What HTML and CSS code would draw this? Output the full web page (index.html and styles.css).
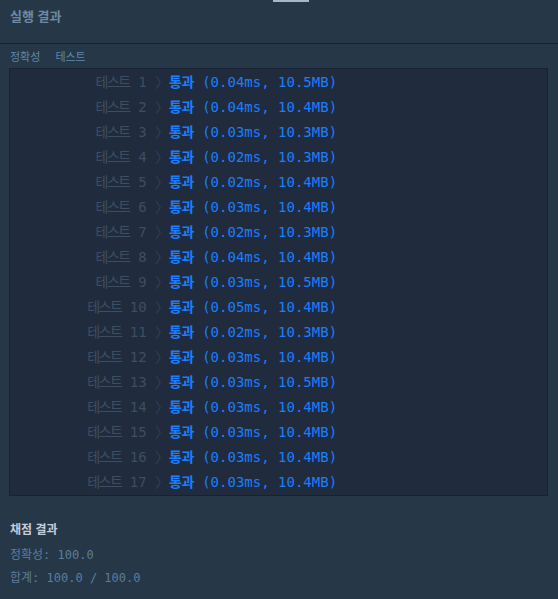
FILE: index.html
```html
<!DOCTYPE html>
<html lang="ko">
<head>
  <meta charset="UTF-8">
  <link rel="stylesheet" href="styles.css">
</head>
<body>
  <div class="splitter"></div>

  <!-- 실행 결과 헤더 -->
  <div class="output-header">실행 결과</div>

  <div class="tabs">
    <span class="tab">정확성</span>
    <span class="tab">테스트</span>
  </div>

  <!-- 테스트 결과 목록 -->
  <div class="console">
    <div class="row"><span class="label"><span class="ko">테스트</span> 1 <span class="arrow">〉</span></span><span class="result"><span class="pass">통과</span> (0.04ms, 10.5MB)</span></div>
    <div class="row"><span class="label"><span class="ko">테스트</span> 2 <span class="arrow">〉</span></span><span class="result"><span class="pass">통과</span> (0.04ms, 10.4MB)</span></div>
    <div class="row"><span class="label"><span class="ko">테스트</span> 3 <span class="arrow">〉</span></span><span class="result"><span class="pass">통과</span> (0.03ms, 10.3MB)</span></div>
    <div class="row"><span class="label"><span class="ko">테스트</span> 4 <span class="arrow">〉</span></span><span class="result"><span class="pass">통과</span> (0.02ms, 10.3MB)</span></div>
    <div class="row"><span class="label"><span class="ko">테스트</span> 5 <span class="arrow">〉</span></span><span class="result"><span class="pass">통과</span> (0.02ms, 10.4MB)</span></div>
    <div class="row"><span class="label"><span class="ko">테스트</span> 6 <span class="arrow">〉</span></span><span class="result"><span class="pass">통과</span> (0.03ms, 10.4MB)</span></div>
    <div class="row"><span class="label"><span class="ko">테스트</span> 7 <span class="arrow">〉</span></span><span class="result"><span class="pass">통과</span> (0.02ms, 10.3MB)</span></div>
    <div class="row"><span class="label"><span class="ko">테스트</span> 8 <span class="arrow">〉</span></span><span class="result"><span class="pass">통과</span> (0.04ms, 10.4MB)</span></div>
    <div class="row"><span class="label"><span class="ko">테스트</span> 9 <span class="arrow">〉</span></span><span class="result"><span class="pass">통과</span> (0.03ms, 10.5MB)</span></div>
    <div class="row"><span class="label"><span class="ko">테스트</span> 10 <span class="arrow">〉</span></span><span class="result"><span class="pass">통과</span> (0.05ms, 10.4MB)</span></div>
    <div class="row"><span class="label"><span class="ko">테스트</span> 11 <span class="arrow">〉</span></span><span class="result"><span class="pass">통과</span> (0.02ms, 10.3MB)</span></div>
    <div class="row"><span class="label"><span class="ko">테스트</span> 12 <span class="arrow">〉</span></span><span class="result"><span class="pass">통과</span> (0.03ms, 10.4MB)</span></div>
    <div class="row"><span class="label"><span class="ko">테스트</span> 13 <span class="arrow">〉</span></span><span class="result"><span class="pass">통과</span> (0.03ms, 10.5MB)</span></div>
    <div class="row"><span class="label"><span class="ko">테스트</span> 14 <span class="arrow">〉</span></span><span class="result"><span class="pass">통과</span> (0.03ms, 10.4MB)</span></div>
    <div class="row"><span class="label"><span class="ko">테스트</span> 15 <span class="arrow">〉</span></span><span class="result"><span class="pass">통과</span> (0.03ms, 10.4MB)</span></div>
    <div class="row"><span class="label"><span class="ko">테스트</span> 16 <span class="arrow">〉</span></span><span class="result"><span class="pass">통과</span> (0.03ms, 10.4MB)</span></div>
    <div class="row"><span class="label"><span class="ko">테스트</span> 17 <span class="arrow">〉</span></span><span class="result"><span class="pass">통과</span> (0.03ms, 10.4MB)</span></div>
  </div>

  <!-- 채점 결과 -->
  <div class="summary">
    <div class="summary-title">채점 결과</div>
    <div class="summary-line">정확성: 100.0</div>
    <div class="summary-line">합계: 100.0 / 100.0</div>
  </div>
</body>
</html>
```
FILE: styles.css
```css
/* 기본 */
body {
  margin: 0;
  background: #263747;
  font-family: "Noto Sans CJK KR", sans-serif;
}

/* 상단 리사이즈 핸들 */
.splitter {
  width: 36px;
  height: 2px;
  margin-left: 273px;
  background: #a9b7c5;
}

.output-header {
  height: 41px;
  padding-left: 10px;
  line-height: 28px;
  font-size: 13px;
  font-weight: bold;
  color: #6f8aa3;
  border-bottom: 1px solid #172231;
}

.tabs {
  display: flex;
  gap: 15px;
  height: 24px;
  padding-left: 10px;
  align-items: center;
  font-size: 11px;
  color: #5d88ad;
}

/* 콘솔 박스 */
.console {
  margin: 0 10px 0 9px;
  padding-top: 1px;
  background: #202b3d;
  border: 1px solid #172233;
  font-family: "DejaVu Sans Mono", "Noto Sans CJK KR", monospace;
  font-size: 14px;
}
.row {
  display: flex;
  height: 25px;
  line-height: 25px;
  white-space: pre;
}
.label {
  width: 159px;
  text-align: right;
  color: #3e4e62;
}
.arrow {
  color: #324153;
}
.result {
  color: #1a7fff;
}
.ko {
  letter-spacing: -1.5px;
}
.pass {
  font-weight: bold;
  letter-spacing: -0.5px;
}

/* 채점 결과 */
.summary {
  padding: 20px 10px 0;
}
.summary-title {
  height: 28px;
  line-height: 25px;
  font-size: 12px;
  font-weight: bold;
  color: #c3cfdb;
}
.summary-line {
  height: 23px;
  line-height: 23px;
  font-family: "DejaVu Sans Mono", "Noto Sans CJK KR", monospace;
  font-size: 12px;
  color: #5c7d9c;
}
```
